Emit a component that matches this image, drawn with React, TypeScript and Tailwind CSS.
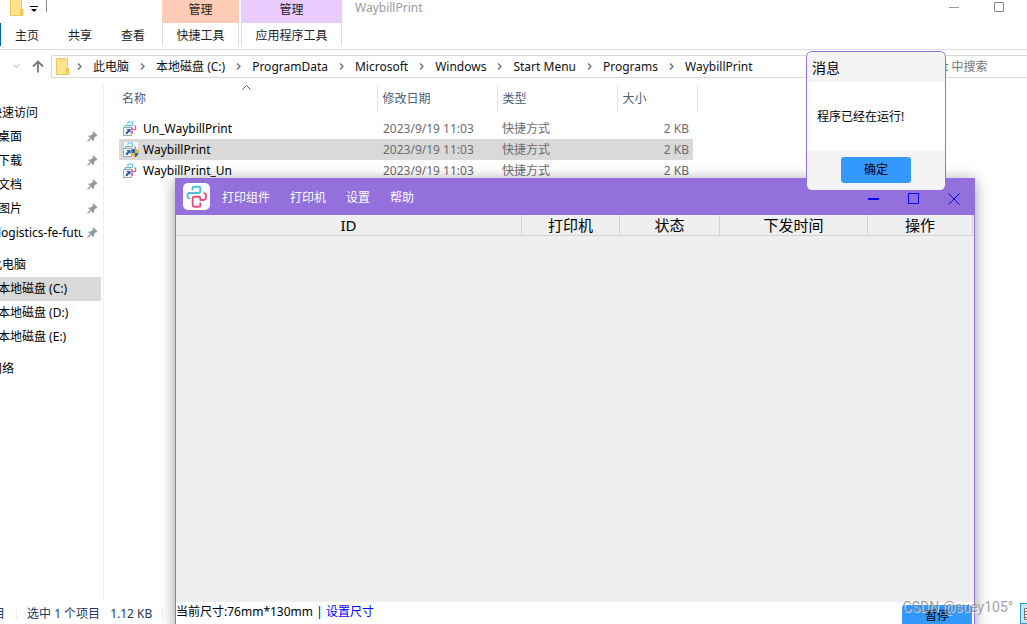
import React, { useState } from 'react';

const crumbs = ['此电脑', '本地磁盘 (C:)', 'ProgramData', 'Microsoft', 'Windows', 'Start Menu', 'Programs', 'WaybillPrint'];

const files = [
  { name: 'Un_WaybillPrint', date: '2023/9/19 11:03', type: '快捷方式', size: '2 KB', admin: false },
  { name: 'WaybillPrint', date: '2023/9/19 11:03', type: '快捷方式', size: '2 KB', admin: true },
  { name: 'WaybillPrint_Un', date: '2023/9/19 11:03', type: '快捷方式', size: '2 KB', admin: false },
];

const pinned = ['桌面', '下载', '文档', '图片', 'logistics-fe-futu'];
const drives = ['本地磁盘 (C:)', '本地磁盘 (D:)', '本地磁盘 (E:)'];

function FolderIcon() {
  return (
    <svg width="14" height="17" viewBox="0 0 14 17" className="shrink-0">
      <path d="M0.5 0.5h11v10h1.5v6H0.5z" fill="#ffe391" stroke="#efc857" />
      <path d="M10.5 10.5v5M12 10.5v5" stroke="#e9bc3f" />
    </svg>
  );
}

function Crumb({ label }: { label: string }) {
  return (
    <>
      <svg width="5" height="7" viewBox="0 0 5 7" className="mr-[11px] ml-[7px] shrink-0">
        <path d="M1 0.5l3 3-3 3" fill="none" stroke="#6b6b6b" strokeWidth="1.3" />
      </svg>
      <button className="pr-1 whitespace-nowrap">{label}</button>
    </>
  );
}

function PinIcon() {
  return (
    <svg width="11" height="11" viewBox="0 0 11 11" className="shrink-0">
      <path d="M6.5 0.5l4 4-1 1-0.8-0.2-1.8 1.9 0.2 1.8-1 1-4.8-4.8 1-1 1.8 0.2 1.8-1.9-0.3-1z" fill="#8d9aa5" />
      <path d="M3.5 7.5L0.5 10.5" stroke="#8d9aa5" strokeWidth="1.2" />
    </svg>
  );
}

// The two interlocking strokes of the print tool's logo
function LogoStrokes() {
  return (
    <g fill="none" strokeWidth="1.9" strokeLinejoin="round" strokeLinecap="round">
      <path d="M9.5 6.5V5.2Q9.5 3.8 11 3.8H15.8Q17.3 3.8 17.3 5.2V8.6Q17.3 10 15.8 10H6.5Q4.5 10.3 4.5 12V13.4Q4.6 15 6.3 15.4" stroke="#4dbde0" />
      <path d="M17.3 20.3V22.5Q17.3 23.8 15.8 23.8H11.2Q9.7 23.8 9.7 22.3V15.3Q9.7 13.8 11.2 13.8H15.8Q17.3 13.8 17.3 15.3V17H20.5Q22.7 16.8 22.9 15V12Q22.7 10.6 21.3 10.2" stroke="#ef4b73" />
    </g>
  );
}

function ShortcutIcon({ admin }: { admin: boolean }) {
  return (
    <svg width="16" height="16" viewBox="0 0 16 16" className="shrink-0">
      {admin && <rect x="1" width="14" height="14" rx="2" fill="#fff" />}
      <svg x="1" y="0" width="13" height="14" viewBox="3 2 22 24">
        <LogoStrokes />
      </svg>
      <rect x="0.5" y="6.5" width="8" height="8" fill="#fff" stroke="#a8a8a8" />
      <path d="M3.5 8H7.5V12L6.2 10.8 4 13.4 2.2 12 4.7 9.4z" fill="#1f5fae" />
      {admin && (
        <g>
          <path d="M12 6.5v4.5H8.5V7.8z" fill="#1769b5" />
          <path d="M12 6.5l3.5 1.3V11H12z" fill="#f6b82b" />
          <path d="M8.5 11H12v4.2Q9 14 8.5 11z" fill="#f6b82b" />
          <path d="M12 11h3.5Q15 14 12 15.2z" fill="#1769b5" />
        </g>
      )}
    </svg>
  );
}

function SidebarItem({ label, pin, selected }: { label: string; pin?: boolean; selected?: boolean }) {
  return (
    <li className={`flex h-6 w-[111px] items-center pl-2 ${selected ? 'bg-[#d9d9d9]' : ''}`}>
      <button className="min-w-0 flex-1 overflow-hidden text-left whitespace-nowrap">{label}</button>
      {pin && <span className="mr-[3px] mb-0.5 ml-1"><PinIcon /></span>}
    </li>
  );
}

function Explorer() {
  return (
    <div className="flex h-full flex-col">
      {/* Title bar and ribbon tabs */}
      <header className="flex h-[50px] shrink-0 border-b border-[#dadbdc]">
        <div className="w-[162px]">
          <div className="flex h-[23px] items-start pl-[10px]">
            <div className="-mt-px"><FolderIcon /></div>
            <svg width="8" height="8" viewBox="0 0 8 8" className="mt-[5px] ml-1.5">
              <path d="M0 1.5h8" stroke="#000" />
              <path d="M1 4h6l-3 3z" fill="#000" />
            </svg>
            <div className="ml-2 h-3 border-l border-[#8a8a8a]" />
          </div>
          <nav className="flex h-[23px] items-center gap-[29px] border-l border-[#0063b1] pt-0.5 pl-3.5 text-[#222]">
            <button>主页</button>
            <button>共享</button>
            <button>查看</button>
          </nav>
        </div>
        <div className="w-[77px] text-[#222]">
          <div className="h-[23px] bg-[#fecbb4] text-center leading-5">管理</div>
          <button className="h-[23px] w-full border-x border-[#dcdcdc] pt-0.5 whitespace-nowrap">快捷工具</button>
        </div>
        <div className="ml-0.5 w-[101px] text-[#222]">
          <div className="h-[23px] bg-[#eacbfd] text-center leading-5">管理</div>
          <button className="h-[23px] w-full border-x border-[#dcdcdc] pt-0.5 whitespace-nowrap">应用程序工具</button>
        </div>
        <h1 className="ml-[13px] leading-4 text-[#9b9b9b]">WaybillPrint</h1>
        <div className="mt-px mr-[22px] ml-auto flex gap-[34px]">
          <button aria-label="最小化" className="h-3">
            <svg width="11" height="12" viewBox="0 0 11 12"><path d="M0 6.5h10" stroke="#999" /></svg>
          </button>
          <button aria-label="最大化" className="h-3">
            <svg width="11" height="12" viewBox="0 0 11 12"><path d="M0.5 1.5h9v9h-9z" fill="none" stroke="#888" /></svg>
          </button>
        </div>
      </header>

      {/* Address bar */}
      <div className="mt-[5px] flex h-[23px] shrink-0">
        <div className="flex w-[51px] items-center justify-end gap-3 pr-[7px]">
          <svg width="7" height="5" viewBox="0 0 7 5"><path d="M0.5 0.5l3 3 3-3" fill="none" stroke="#ccc" strokeWidth="1.2" /></svg>
          <svg width="12" height="13" viewBox="0 0 12 13"><path d="M6 12.5V1.5M1 6.5l5-5 5 5" fill="none" stroke="#777" strokeWidth="1.8" /></svg>
        </div>
        <nav className="flex flex-1 items-center border border-r-0 border-[#d9d9d9] pl-1 text-[#111]">
          <FolderIcon />
          {crumbs.map(c => <Crumb key={c} label={c} />)}
        </nav>
        <input
          aria-label="搜索"
          placeholder="t 中搜索"
          className="w-[83px] border-y border-[#d9d9d9] outline-none placeholder:text-[#757575]"
        />
      </div>

      <div className="flex min-h-0 flex-1">
        <aside className="mt-[7px] w-[104px] shrink-0 border-r border-[#f0f0f0] pt-4">
          <div className="-ml-[10px] flex flex-col gap-2">
            <section>
              <h2 className="h-6 leading-6">快速访问</h2>
              <ul>{pinned.map(p => <SidebarItem key={p} label={p} pin />)}</ul>
            </section>
            <section>
              <h2 className="h-6 leading-6">此电脑</h2>
              <ul>{drives.map((d, i) => <SidebarItem key={d} label={d} selected={i === 0} />)}</ul>
            </section>
            <h2 className="h-6 leading-6">网络</h2>
          </div>
        </aside>

        <main className="pt-[7px] pl-[15px]">
          <table className="w-[578px] table-fixed">
            <colgroup>
              <col className="w-[258px]" />
              <col className="w-[120px]" />
              <col className="w-[120px]" />
              <col className="w-[76px]" />
              <col className="w-1" />
            </colgroup>
            <thead>
              <tr className="h-7 text-left text-[#4c607a]">
                <th className="relative border-r border-[#e2e2e2] pl-[3px] font-normal">
                  名称
                  <svg width="9" height="5" viewBox="0 0 9 5" className="absolute top-0 left-[123px]"><path d="M0.5 4.5l4-4 4 4" fill="none" stroke="#555" /></svg>
                </th>
                <th className="border-r border-[#e2e2e2] pl-[5px] font-normal">修改日期</th>
                <th className="border-r border-[#e2e2e2] pl-[5px] font-normal">类型</th>
                <th colSpan={2} className="border-r border-[#e2e2e2] pl-[5px] font-normal">大小</th>
              </tr>
            </thead>
            <tbody>
              <tr className="h-[5px]" />
              {files.map(f => (
                <tr key={f.name} className={`h-[21px] text-[#6d6d6d] ${f.admin ? '[&>td]:bg-[#d9d9d9]' : ''}`}>
                  <td className="pl-1 text-black">
                    <div className="flex items-center gap-1">
                      <ShortcutIcon admin={f.admin} />
                      {f.name}
                    </div>
                  </td>
                  <td className="pl-1.5">{f.date}</td>
                  <td className="pl-[5px]">{f.type}</td>
                  <td className="pr-1 text-right">{f.size}</td>
                </tr>
              ))}
            </tbody>
          </table>
        </main>
      </div>

      <footer className="flex h-[23px] shrink-0 items-center pt-0.5 text-[#1e395b]">
        <span className="-ml-[7px]">目</span>
        <span className="ml-[11px] h-3 border-l border-[#eee]" />
        <span className="ml-2.5">选中 1 个项目</span>
        <span className="ml-2.5">1.12 KB</span>
        <span className="ml-2.5 h-3 border-l border-[#eee]" />
        <button aria-label="详细信息" className="ml-auto flex h-full w-[7px] items-center border border-r-0 border-[#26a0da] bg-[#cce8f6] pl-[3px]">
          <svg width="3" height="12" viewBox="0 0 3 12"><path d="M3 0.5H0.5v11H3M1 3.5h2M1 6.5h2M1 9.5h2" fill="#fff" stroke="#777" /></svg>
        </button>
      </footer>
    </div>
  );
}

function PrintWindow() {
  return (
    <div className="absolute top-[178px] right-[52px] -bottom-2 left-[175px] flex flex-col border-x border-[#9370db] bg-white shadow-[0_2px_14px_rgba(0,0,0,0.4)]">
      <header className="flex h-[37px] shrink-0 items-center bg-[#9370db] pl-[7px] text-white">
        <svg width="27" height="27" viewBox="0 0 27 27">
          <rect width="27" height="27" rx="5" fill="#fff" />
          <LogoStrokes />
        </svg>
        <nav className="ml-3 flex gap-5 pt-0.5">
          <button>打印组件</button>
          <button>打印机</button>
          <button>设置</button>
          <button>帮助</button>
        </nav>
        <div className="mt-1 mr-3.5 ml-auto flex gap-7">
          <button aria-label="最小化"><svg width="12" height="12" viewBox="0 0 12 12"><path d="M0 6h11" stroke="#00f" strokeWidth="2" /></svg></button>
          <button aria-label="最大化"><svg width="12" height="12" viewBox="0 0 12 12"><path d="M0.5 0.5h10v10h-10z" fill="none" stroke="#00f" /></svg></button>
          <button aria-label="关闭"><svg width="12" height="12" viewBox="0 0 12 12"><path d="M0.5 0.5l11 11M11.5 0.5l-11 11" stroke="#00f" /></svg></button>
        </div>
      </header>
      <div className="flex-1 bg-[#efefef] pr-px">
        <table className="w-full table-fixed text-[15px] text-black">
          <thead>
            <tr className="h-5 border-b border-[#d2d2d2] leading-5">
              <th className="border-r border-[#d2d2d2] p-0 font-normal">ID</th>
              <th className="w-[98px] border-r border-[#d2d2d2] p-0 font-normal">打印机</th>
              <th className="w-[100px] border-r border-[#d2d2d2] p-0 font-normal">状态</th>
              <th className="w-[148px] border-r border-[#d2d2d2] p-0 font-normal">下发时间</th>
              <th className="w-[105px] border-r border-[#d2d2d2] p-0 font-normal">操作</th>
            </tr>
          </thead>
        </table>
      </div>
      <footer className="flex h-[30px] shrink-0 items-start justify-between">
        <p className="leading-5">
          当前尺寸:76mm*130mm | <a href="#size" className="text-[#00f]">设置尺寸</a>
        </p>
        <button className="mt-[3px] mr-0.5 h-[26px] w-[70px] rounded-[3px] bg-[#3399ff] pb-1">暂停</button>
      </footer>
    </div>
  );
}

function MessageDialog({ onClose }: { onClose: () => void }) {
  return (
    <div role="dialog" aria-label="消息" className="absolute top-[51px] right-[81px] w-[140px] overflow-hidden rounded-md border border-b-0 border-[#9370db] bg-white text-black">
      <h2 className="h-[30px] bg-[#f4f4f4] pl-[5px] text-sm leading-[32px]">消息</h2>
      <p className="h-[69px] pl-2.5 leading-[70px]">程序已经在运行!</p>
      <div className="flex h-[39px] items-start justify-center bg-[#f4f4f4] pt-1.5">
        <button onClick={onClose} className="h-[26px] w-[70px] rounded-[3px] bg-[#3399ff]">确定</button>
      </div>
    </div>
  );
}

function App() {
  const [showMessage, setShowMessage] = useState(true);

  return (
    <div className="relative h-screen overflow-hidden bg-white font-['Noto_Sans','Noto_Sans_CJK_SC',sans-serif] text-xs text-black">
      <Explorer />
      <PrintWindow />
      {showMessage && <MessageDialog onClose={() => setShowMessage(false)} />}
      <div className="pointer-events-none absolute right-[14px] bottom-[7px] font-[Roboto,sans-serif] text-sm leading-5 text-[#888]/80 [text-shadow:1px_1px_0_rgba(255,255,255,0.6)]">
        CSDN @suey105°
      </div>
    </div>
  );
}

export default App;
